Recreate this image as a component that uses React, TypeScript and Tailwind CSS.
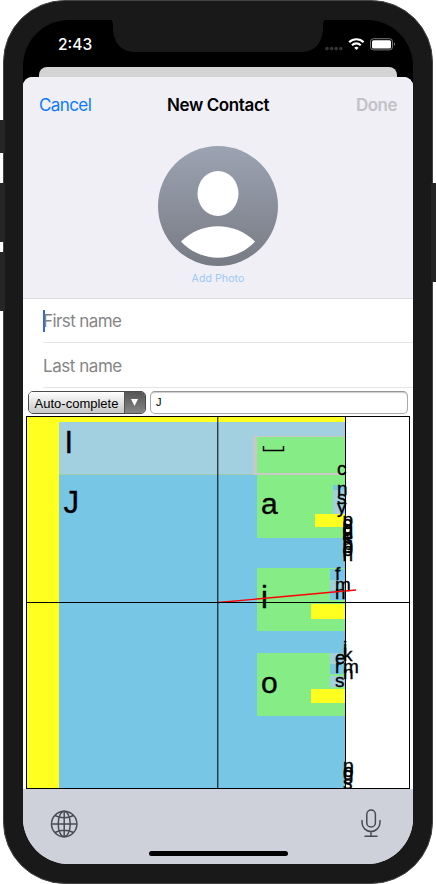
const blocks: [number, number, number, number, string][] = [
  [27, 417, 318, 371, "#ffff20"],
  [59, 422, 286, 52, "#a2d0e1"],
  [59, 474, 286, 1, "#9dcdad"],
  [59, 475, 286, 313, "#78c6e6"],
  [253, 436, 92, 39, "#c8c8c8"],
  [257, 437, 88, 36, "#86ed86"],
  [257, 475, 88, 63, "#86ed86"],
  [333, 485, 12, 5, "#78c6e6"],
  [333, 490, 12, 24, "#a2d0e1"],
  [315, 514, 30, 13, "#ffff20"],
  [257, 568, 88, 63, "#86ed86"],
  [330, 569, 15, 11, "#78c6e6"],
  [330, 580, 15, 10, "#a2d0e1"],
  [330, 590, 15, 10, "#78c6e6"],
  [311, 604, 34, 15, "#ffff20"],
  [257, 653, 88, 63, "#86ed86"],
  [330, 653, 15, 11, "#a2d0e1"],
  [330, 664, 15, 10, "#78c6e6"],
  [330, 676, 15, 11, "#a2d0e1"],
  [311, 689, 34, 14, "#ffff20"],
];

const letters: [string, number, number, number][] = [
  ["I", 64.5, 452.5, 31],
  ["J", 63.5, 513, 31],
  ["a", 261, 514, 30],
  ["i", 261, 608, 31],
  ["o", 261, 693, 30],
  ["c", 337, 475, 19],
  ["n", 337, 495, 19],
  ["s", 337, 504, 19],
  ["y", 337, 513, 19],
  ["p", 342.5, 526, 19],
  ["c", 342.5, 529, 19],
  ["d", 342.5, 534, 19],
  ["g", 342.5, 536, 19],
  ["m", 342.5, 539, 12],
  ["e", 342.5, 543, 19],
  ["b", 342.5, 550, 19],
  ["p", 342.5, 553, 19],
  ["o", 342.5, 556, 19],
  ["n", 342.5, 561, 19],
  ["f", 335, 580, 19],
  ["m", 335, 591, 19],
  ["n", 335, 599, 19],
  ["i", 343, 654, 19],
  ["k", 343, 661, 19],
  ["e", 335, 664, 19],
  ["r", 335, 673, 19],
  ["m", 343, 673, 19],
  ["n", 343, 679, 19],
  ["s", 335, 687, 19],
  ["p", 343, 772, 19],
  ["o", 343, 777, 19],
  ["g", 343, 780, 19],
  ["s", 343, 789, 19],
];

function Dasher() {
  return (
    <svg className="mx-[3px] block h-[373px] w-[384px]" viewBox="26 416 384 373" fontFamily="'Liberation Sans', Arial, sans-serif">
      <rect x="26" y="416" width="384" height="373" fill="#fff" />
      {blocks.map(([x, y, w, h, fill], i) => (
        <rect key={i} x={x} y={y} width={w} height={h} fill={fill} />
      ))}
      <path d="M263.5 446v4.5h20V446" fill="none" stroke="#000" strokeWidth="1.5" />
      {letters.map(([ch, x, y, size], i) => (
        <text key={i} x={x} y={y} fontSize={size} stroke="#000" strokeWidth="0.35">{ch}</text>
      ))}
      <path d="M218 602.5L356 590" stroke="#f00" strokeWidth="1.3" />
      <path d="M217.8 417V788M345.5 417V788M27 602.5H409" stroke="#000" strokeWidth="1" />
      <rect x="26.5" y="416.5" width="383" height="372" fill="none" stroke="#000" />
    </svg>
  );
}

function StatusBar() {
  return (
    <div className="flex h-[47px] shrink-0 items-center">
      <div className="ml-[35px] mt-[3px] w-[60px] text-[15.5px] font-medium leading-[18px] text-white">2:43</div>
      <svg className="ml-auto mr-[15px] mt-[1px] h-[16px] w-[74px]" viewBox="0 0 74 16">
        <g fill="#353535">
          <circle cx="3" cy="12.6" r="1.8" /><circle cx="7.6" cy="12.6" r="1.8" /><circle cx="12.2" cy="12.6" r="1.8" /><circle cx="16.8" cy="12.6" r="1.8" />
        </g>
        <g fill="none" stroke="#fff" strokeWidth="2.1">
          <path d="M25.2 6.3a10.2 10.2 0 0 1 14.4 0M28 9.2a6.2 6.2 0 0 1 8.8 0" />
        </g>
        <path d="M32.4 14l-2.2-2.3a3.2 3.2 0 0 1 4.4 0z" fill="#fff" />
        <rect x="46.5" y="2.7" width="22" height="11.2" rx="3" fill="none" stroke="#777" />
        <rect x="48" y="4.2" width="19" height="8.2" rx="1.5" fill="#fff" />
        <path d="M70 6.3q2 1.8 0 3.6z" fill="#888" />
      </svg>
    </div>
  );
}

export default function App() {
  return (
    <div className="relative h-[884px] w-[436px] overflow-hidden bg-white font-['Inter',sans-serif]">
      <div className="absolute left-0 top-[120px] z-10 h-[33px] w-[5px] bg-[#252525]" />
      <div className="absolute left-0 top-[183px] z-10 h-[59px] w-[5px] bg-[#252525]" />
      <div className="absolute left-0 top-[252px] z-10 h-[59px] w-[5px] bg-[#252525]" />
      <div className="absolute right-0 top-[183px] z-10 h-[99px] w-[5px] bg-[#252525]" />
      <div className="relative mx-[3px] h-[884px] rounded-[62px] border border-[#444] bg-[#191919] p-[19px]">
        <div className="relative flex h-[844px] flex-col overflow-hidden rounded-[46px] bg-black">
          <StatusBar />
          <div className="mx-4 h-[10px] shrink-0 rounded-t-[8px] bg-[#d4d4d4]" />
          <div className="flex flex-1 flex-col overflow-hidden rounded-t-[9px] bg-white">
            <div className="flex h-[222px] shrink-0 flex-col items-center border-b border-[#dcdce0] bg-[#f0eff6]">
              <div className="flex h-[56px] w-full items-center justify-between px-4 text-[17px] leading-5">
                <span className="w-[70px] tracking-[-0.6px] text-[#0a7aff]">Cancel</span>
                <span className="font-semibold tracking-[-0.38px] text-black">New Contact</span>
                <span className="w-[70px] text-right font-semibold tracking-[-0.5px] text-[#c2c2c6]">Done</span>
              </div>
              <svg className="mt-[13px] h-[120px] w-[120px] shrink-0" viewBox="0 0 120 120">
                <defs>
                  <linearGradient id="avatar" x2="0" y2="1">
                    <stop stopColor="#9ca3b2" /><stop offset="1" stopColor="#777b84" />
                  </linearGradient>
                </defs>
                <circle cx="60" cy="60" r="60" fill="url(#avatar)" />
                <ellipse cx="60" cy="47.5" rx="20.5" ry="22.5" fill="#fff" />
                <path d="M23 95.5C43 75 77 75 97 95.5C77 117 43 117 23 95.5Z" fill="#fff" />
              </svg>
              <div className="mt-[6px] text-[10.5px] leading-[14px] tracking-[0.1px] text-[#9bc8f6]">Add Photo</div>
            </div>
            <div className="ml-5 flex h-[44px] shrink-0 items-center border-b border-[#e4e4e6] text-[17px] tracking-[-0.6px] text-[#858587]">
              <span className="h-[22px] w-[2px] bg-[#3562f5]" />
              <span className="-ml-[2px] mt-[3px]">First name</span>
            </div>
            <div className="ml-5 flex h-[45px] shrink-0 items-center border-b border-[#e4e4e6] pt-[3px] text-[17px] tracking-[-0.45px] text-[#858587]">Last name</div>
            <div className="flex h-[28px] shrink-0 items-start gap-[4px] px-[5px] pt-[3px] font-['Liberation_Sans',Arial,sans-serif]">
              <div className="flex h-[23px] w-[118px] shrink-0 overflow-hidden rounded-[5px] border border-[#4b4b4b]">
                <div className="flex flex-1 items-center justify-center border-r border-[#555] bg-linear-to-b from-white to-[#c8c8c8] pt-[2px] text-[13px] text-black">Auto-complete</div>
                <div className="flex w-[20px] items-center justify-center bg-linear-to-b from-[#555] to-[#858585]">
                  <svg className="mr-px h-[7px] w-[7px]" viewBox="0 0 7 7"><path d="M0 0H7L3.5 7Z" fill="#fff" /></svg>
                </div>
              </div>
              <div className="h-[23px] w-[258px] rounded-[5px] border border-[#aaa] border-t-[#969696] px-[5px] text-[11px] leading-[20px] text-black shadow-[inset_0_1px_1px_#ccc]">J</div>
            </div>
            <Dasher />
            <div className="relative flex flex-1 items-start justify-between bg-[#cfd1da] px-[27px] pt-[20px]">
              <svg className="mt-[1px] h-[28px] w-[28px]" viewBox="0 0 28 28" fill="none" stroke="#484b54" strokeWidth="1.5">
                <circle cx="14.2" cy="14" r="12.7" />
                <ellipse cx="14.2" cy="14" rx="6" ry="12.7" />
                <path d="M14.2 1.3V26.7M1.5 14H26.9M4.9 5.5Q14.2 10 23.5 5.5M4.9 22.5Q14.2 18 23.5 22.5" />
              </svg>
              <svg className="mr-[4px] h-[29px] w-[22px]" viewBox="0 0 22 29" fill="none" stroke="#484b54" strokeWidth="1.5" strokeLinecap="round">
                <rect x="6.8" y="1" width="8.6" height="17" rx="4.3" />
                <path d="M2 11.5V13.5A9 9 0 0 0 20 13.5V11.5M11 22.5V27M5 27.3H17" />
              </svg>
              <div className="absolute bottom-[8px] left-[126px] h-[5px] w-[139px] rounded-full bg-black" />
            </div>
          </div>
        </div>
        <svg className="absolute left-[108px] top-[18px] h-[34px] w-[212px]" viewBox="0 0 212 34">
          <path d="M-3 0H215V1Q211 1 211 6V11Q209 32 190 33H22Q3 32 1 11V6Q1 1 -3 1Z" fill="#191919" />
        </svg>
      </div>
    </div>
  );
}
